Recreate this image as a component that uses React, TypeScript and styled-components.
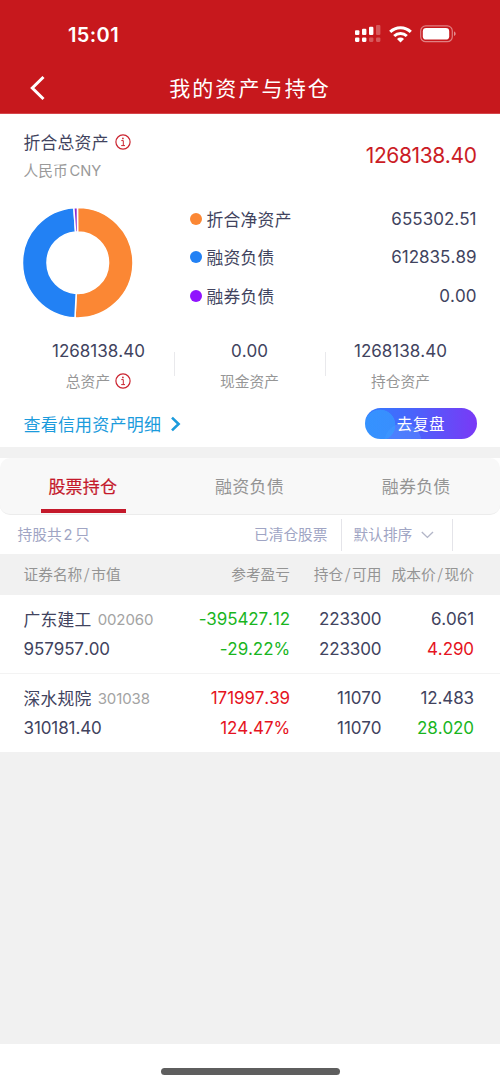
import React from "react";
import styled, { createGlobalStyle } from "styled-components";

const GlobalStyle = createGlobalStyle`
  * { box-sizing: border-box; }
  body {
    margin: 0;
    background: #f1f1f1;
    font-family: Inter, "Noto Sans CJK SC", sans-serif;
    font-kerning: none;
    color: #41435e;
    -webkit-font-smoothing: antialiased;
  }
`;

const Screen = styled.div`
  width: 500px;
  height: 1084px;
  display: flex;
  flex-direction: column;
  background: #f1f1f1;
  overflow: hidden;
  white-space: nowrap;
`;

const Header = styled.header`
  height: 114px;
  flex: none;
  background: #c7181d;
  color: #fff;
  border-bottom: 1px solid #d5454a;
`;

const StatusBar = styled.div`
  height: 62px;
  padding: 6px 44px 0 68px;
  display: flex;
  align-items: center;
  justify-content: space-between;
`;

const Clock = styled.span`
  padding-top: 1px;
  font-size: 20px;
  font-weight: 600;
  line-height: 24px;
  letter-spacing: 0.4px;
`;

const StatusIcons = styled.div`
  display: flex;
  align-items: center;
  gap: 8px;
`;

const NavBar = styled.div`
  height: 52px;
  display: grid;
  grid-template-columns: 60px 1fr 60px;
  align-items: center;
`;

const BackButton = styled.button`
  border: 0;
  padding: 0 0 0 29px;
  background: none;
  display: flex;
`;

const Title = styled.h1`
  margin: 0;
  padding-top: 1px;
  font-size: 21px;
  line-height: 30px;
  font-weight: 400;
  letter-spacing: 2.1px;
  text-align: center;
`;

const Summary = styled.section`
  height: 333px;
  flex: none;
  background: #fff;
  padding: 14px 23.5px 0 23px;
`;

const SummaryTop = styled.div`
  height: 80px;
  display: flex;
  justify-content: space-between;
`;

const SummaryLabel = styled.div`
  display: flex;
  align-items: center;
  gap: 6px;
  height: 27px;
  padding-left: 0.5px;
  font-size: 16.8px;
  letter-spacing: 0.25px;
`;

const Currency = styled.div`
  height: 32px;
  padding-left: 0.5px;
  line-height: 32px;
  font-size: 14.7px;
  color: #9a9a9a;

  span { margin-left: 2px; letter-spacing: -0.1px; }
`;

const Total = styled.div`
  padding-top: 15px;
  font-size: 21px;
  line-height: 26px;
  letter-spacing: -0.4px;
  color: #cb1c25;
`;

const Breakdown = styled.div`
  display: flex;
  height: 124px;
`;

const Legend = styled.div`
  flex: 1;
  margin-left: 56.5px;
  display: flex;
  flex-direction: column;
`;

const LegendRow = styled.div`
  height: 38.6px;
  padding-bottom: 17px;
  display: flex;
  align-items: center;
  font-size: 16.8px;
  letter-spacing: 0.25px;
`;

const Dot = styled.i<{ $color: string }>`
  width: 12px;
  height: 12px;
  margin-right: 5px;
  border-radius: 50%;
  background: ${(p) => p.$color};
`;

const Value = styled.span`
  font-size: 17px;
  line-height: 24px;
  letter-spacing: 0.02px;
`;

const LegendValue = styled(Value)`
  margin-left: auto;
`;

const Stats = styled.div`
  display: flex;
  margin-top: 2px;
  height: 64px;
`;

const Stat = styled.div`
  position: relative;
  width: 151px;
  flex: none;
  display: flex;
  flex-direction: column;
  align-items: center;
  padding-top: 5px;

  & + &::before {
    content: "";
    position: absolute;
    left: 0;
    top: 18px;
    width: 1px;
    height: 24px;
    background: #e9e9ec;
  }
`;

const StatLabel = styled.span`
  margin-top: 6px;
  height: 23px;
  display: flex;
  align-items: center;
  gap: 5px;
  font-size: 14.7px;
  letter-spacing: 0.1px;
  color: #969696;
`;

const Actions = styled.div`
  margin-top: 10px;
  height: 31px;
  display: flex;
  align-items: center;
  justify-content: space-between;
`;

const DetailLink = styled.a`
  display: flex;
  align-items: center;
  gap: 10px;
  padding-left: 0.5px;
  font-size: 17px;
  letter-spacing: 0.2px;
  color: #1b9bdc;
`;

const ReviewButton = styled.button`
  width: 112px;
  height: 31px;
  border: 0;
  border-radius: 16px;
  padding: 2px 0 0 1px;
  color: #fff;
  font: 400 15.5px/29px Inter, "Noto Sans CJK SC", sans-serif;
  letter-spacing: 0.7px;
  background:
    radial-gradient(circle at 15px 17px, #359dffb0 0 15px, transparent 15.7px),
    radial-gradient(circle at 38px 34px, #5b96ff70 0 18px, transparent 18.7px),
    linear-gradient(90deg, #347bff 0%, #4369fc 35%, #7a39f6 100%);
`;

const Holdings = styled.section`
  flex: none;
  margin-top: 11px;
  background: #fff;
`;

const Tabs = styled.nav`
  height: 57px;
  display: flex;
  background: #f8f8f8;
  border-bottom: 1.5px solid #ececec;
  border-radius: 10px;
`;

const Tab = styled.button<{ $active?: boolean }>`
  flex: 1;
  display: flex;
  flex-direction: column;
  align-items: center;
  border: 0;
  padding: 16px 1px 0 0;
  background: none;
  font: 400 17px/26px Inter, "Noto Sans CJK SC", sans-serif;
  -webkit-text-stroke: ${(p) => (p.$active ? "0.2px" : "0")};
  letter-spacing: 0.2px;
  color: ${(p) => (p.$active ? "#c4192b" : "#949494")};

  &::after {
    content: "";
    width: 85px;
    height: 3.5px;
    margin: 9px 0 0 1px;
    background: ${(p) => (p.$active ? "#c4192b" : "transparent")};
  }
`;

const FilterBar = styled.div`
  height: 39px;
  padding: 0 47px 0 17.5px;
  display: flex;
  align-items: center;
  font-size: 14.7px;
  line-height: 22px;
  color: #a0a5c4;
`;

const Count = styled.span`
  b { margin: 0 2.5px 0 2px; font-weight: 400; }
`;

const Cleared = styled.span`
  margin-left: auto;
  padding-right: 13.5px;
`;

const Sort = styled.span`
  width: 112px;
  height: 32px;
  padding-left: 11.5px;
  display: flex;
  align-items: center;
  gap: 9px;
  border: solid #e4e4e9;
  border-width: 0 1px;
`;

const Row = styled.div`
  display: grid;
  grid-template-columns: 150px 1fr 91.5px 92.5px;
  padding: 0 26px 0 23.5px;
  text-align: right;
`;

const HeadRow = styled(Row)`
  height: 41px;
  background: #f1f1f1;
  color: #949494;
  font-family: "Noto Sans CJK SC", sans-serif;
  font-size: 14.7px;
  line-height: 39px;

  & > :first-child { text-align: left; }
  & > :last-child { margin-left: -10px; }
`;

const Slash = styled.i`
  margin: 0 1.6px;
  font-style: normal;
`;

const StockRow = styled(Row)`
  height: 79px;
  padding-top: 9px;
  border-bottom: 1px solid #f3f3f3;

  &:last-child { height: 78px; border: 0; }
`;

const Cell = styled.div<{ $left?: boolean }>`
  display: flex;
  flex-direction: column;
  align-items: ${(p) => (p.$left ? "flex-start" : "flex-end")};
`;

const Figure = styled.span<{ $tone?: "up" | "down" }>`
  height: 30px;
  font-size: 17px;
  line-height: 31px;
  letter-spacing: -0.1px;
  color: ${(p) => (p.$tone === "up" ? "#e51321" : p.$tone === "down" ? "#19b51e" : "inherit")};
`;

const StockName = styled.div`
  height: 30px;
  display: flex;
  align-items: center;
  gap: 6px;
  font-size: 16.8px;
  letter-spacing: 0.25px;
`;

const Code = styled.span`
  font-size: 15px;
  letter-spacing: -0.1px;
  color: #a3a3a3;
`;

const HomeArea = styled.footer`
  height: 40px;
  margin-top: auto;
  padding-top: 24px;
  background: #fff;
`;

const HomeIndicator = styled.div`
  width: 179px;
  height: 6.5px;
  margin: 0 auto;
  border-radius: 4px;
  background: #5e5e5e;
`;

const InfoIcon = () => (
  <svg width="16" height="16" viewBox="0 0 16 16" fill="none" stroke="#cb2430">
    <circle cx="8" cy="8" r="7.1" strokeWidth="1.2" />
    <path d="M6.3 6.6H8.3V11.5M6.2 11.6H10" strokeWidth="1" />
    <circle cx="7.9" cy="4.4" r="0.85" fill="#cb2430" stroke="none" />
  </svg>
);

const SignalIcon = () => (
  <svg width="26" height="18" viewBox="0 0 26 18" fill="#fff">
    <rect x="0" y="5.2" width="4.4" height="4.9" rx="1.1" />
    <rect x="7" y="3.8" width="4.4" height="6.3" rx="1.1" />
    <rect x="14" y="1.8" width="4.4" height="8.3" rx="1.1" />
    <rect x="21" y="0" width="4.4" height="10.1" rx="1.1" opacity=".28" />
    <rect x="0" y="12.4" width="4.4" height="4.5" rx="1.1" />
    <rect x="7" y="12.4" width="4.4" height="4.5" rx="1.1" />
    <rect x="14" y="12.4" width="4.4" height="4.5" rx="1.1" opacity=".28" />
    <rect x="21" y="12.4" width="4.4" height="4.5" rx="1.1" opacity=".28" />
  </svg>
);

const WifiIcon = () => (
  <svg width="23" height="17" viewBox="0 0 23 17" fill="none" stroke="#fff" strokeWidth="3">
    <path d="M1.2 5.9A14.7 14.7 0 0 1 21.8 5.9" />
    <path d="M5.2 10A9.1 9.1 0 0 1 17.8 10" />
    <path d="M11.5 16.5L8 13A5 5 0 0 1 15 13Z" fill="#fff" stroke="none" />
  </svg>
);

const BatteryIcon = () => (
  <svg width="36" height="18" viewBox="0 0 36 18">
    <rect x="0.7" y="0.9" width="31.6" height="15.8" rx="5" fill="none" stroke="#fff" strokeOpacity=".45" strokeWidth="1.2" />
    <rect x="2.8" y="3" width="26.4" height="11.6" rx="3.4" fill="#fff" />
    <path d="M34 6.6C36.2 7.3 36.2 10.3 34 11Z" fill="#fff" fillOpacity=".5" />
  </svg>
);

const BackIcon = () => (
  <svg width="18" height="26" viewBox="0 0 18 26" fill="none" stroke="#fff" strokeWidth="3">
    <path d="M14.5 2L3.3 13L14.5 24" />
  </svg>
);

const ArrowIcon = () => (
  <svg width="10" height="16" viewBox="0 0 10 16" fill="none" stroke="#1b9bdc" strokeWidth="2.6">
    <path d="M1 1.6L7.6 8L1 14.4" />
  </svg>
);

const ChevronIcon = () => (
  <svg width="13" height="8" viewBox="0 0 13 8" fill="none" stroke="#b3b6c8" strokeWidth="1.4">
    <path d="M0.8 1L6.4 6.4L12 1" />
  </svg>
);

const slices = [
  { from: -0.2, to: 182.8, color: "#fb8734" },
  { from: 182.8, to: 356, color: "#2281f4" },
  { from: 356, to: 359.7, color: "#8d2bd0" },
];

const arc = (from: number, to: number, outer: number, inner: number) => {
  const at = (deg: number, r: number) => {
    const a = ((deg - 90) * Math.PI) / 180;
    return `${(54.7 + r * Math.cos(a)).toFixed(2)} ${(54.7 + r * Math.sin(a)).toFixed(2)}`;
  };
  const large = to - from > 180 ? 1 : 0;
  return `M${at(from, outer)}A${outer} ${outer} 0 ${large} 1 ${at(to, outer)}L${at(to, inner)}A${inner} ${inner} 0 ${large} 0 ${at(from, inner)}Z`;
};

const Donut = () => (
  <svg width="110" height="110" viewBox="0 0 110 110">
    {slices.map((s) => (
      <path key={s.color} d={arc(s.from, s.to, 55.2, 30.8)} fill={s.color} stroke="#fff" strokeWidth="1.5" />
    ))}
  </svg>
);

const legend = [
  { name: "折合净资产", value: "655302.51", color: "#fb8734" },
  { name: "融资负债", value: "612835.89", color: "#2281f4" },
  { name: "融券负债", value: "0.00", color: "#9013fe" },
];

const stats = [
  { name: "总资产", value: "1268138.40", info: true },
  { name: "现金资产", value: "0.00" },
  { name: "持仓资产", value: "1268138.40" },
];

type Tone = "up" | "down";
const stocks: {
  name: string; code: string; worth: string; profit: string; rate: string; profitTone: Tone;
  held: string; usable: string; cost: string; price: string; priceTone: Tone;
}[] = [
  { name: "广东建工", code: "002060", worth: "957957.00", profit: "-395427.12", rate: "-29.22%", profitTone: "down", held: "223300", usable: "223300", cost: "6.061", price: "4.290", priceTone: "up" },
  { name: "深水规院", code: "301038", worth: "310181.40", profit: "171997.39", rate: "124.47%", profitTone: "up", held: "11070", usable: "11070", cost: "12.483", price: "28.020", priceTone: "down" },
];

export default function App() {
  return (
    <Screen>
      <GlobalStyle />
      <Header>
        <StatusBar>
          <Clock>15:01</Clock>
          <StatusIcons>
            <SignalIcon />
            <WifiIcon />
            <BatteryIcon />
          </StatusIcons>
        </StatusBar>
        <NavBar>
          <BackButton aria-label="返回"><BackIcon /></BackButton>
          <Title>我的资产与持仓</Title>
        </NavBar>
      </Header>

      <Summary>
        <SummaryTop>
          <div>
            <SummaryLabel>折合总资产<InfoIcon /></SummaryLabel>
            <Currency>人民币<span>CNY</span></Currency>
          </div>
          <Total>1268138.40</Total>
        </SummaryTop>
        <Breakdown>
          <Donut />
          <Legend>
            {legend.map((item) => (
              <LegendRow key={item.name}>
                <Dot $color={item.color} />
                {item.name}
                <LegendValue>{item.value}</LegendValue>
              </LegendRow>
            ))}
          </Legend>
        </Breakdown>
        <Stats>
          {stats.map((item) => (
            <Stat key={item.name}>
              <Value>{item.value}</Value>
              <StatLabel>{item.name}{item.info && <InfoIcon />}</StatLabel>
            </Stat>
          ))}
        </Stats>
        <Actions>
          <DetailLink>查看信用资产明细<ArrowIcon /></DetailLink>
          <ReviewButton>去复盘</ReviewButton>
        </Actions>
      </Summary>

      <Holdings>
        <Tabs>
          <Tab $active>股票持仓</Tab>
          <Tab>融资负债</Tab>
          <Tab>融券负债</Tab>
        </Tabs>
        <FilterBar>
          <Count>持股共<b>2</b>只</Count>
          <Cleared>已清仓股票</Cleared>
          <Sort>默认排序<ChevronIcon /></Sort>
        </FilterBar>
        <HeadRow>
          <span>证券名称<Slash>/</Slash>市值</span>
          <span>参考盈亏</span>
          <span>持仓<Slash>/</Slash>可用</span>
          <span>成本价<Slash>/</Slash>现价</span>
        </HeadRow>
        {stocks.map((s) => (
          <StockRow key={s.code}>
            <Cell $left>
              <StockName>{s.name}<Code>{s.code}</Code></StockName>
              <Figure>{s.worth}</Figure>
            </Cell>
            <Cell>
              <Figure $tone={s.profitTone}>{s.profit}</Figure>
              <Figure $tone={s.profitTone}>{s.rate}</Figure>
            </Cell>
            <Cell>
              <Figure>{s.held}</Figure>
              <Figure>{s.usable}</Figure>
            </Cell>
            <Cell>
              <Figure>{s.cost}</Figure>
              <Figure $tone={s.priceTone}>{s.price}</Figure>
            </Cell>
          </StockRow>
        ))}
      </Holdings>

      <HomeArea><HomeIndicator /></HomeArea>
    </Screen>
  );
}
